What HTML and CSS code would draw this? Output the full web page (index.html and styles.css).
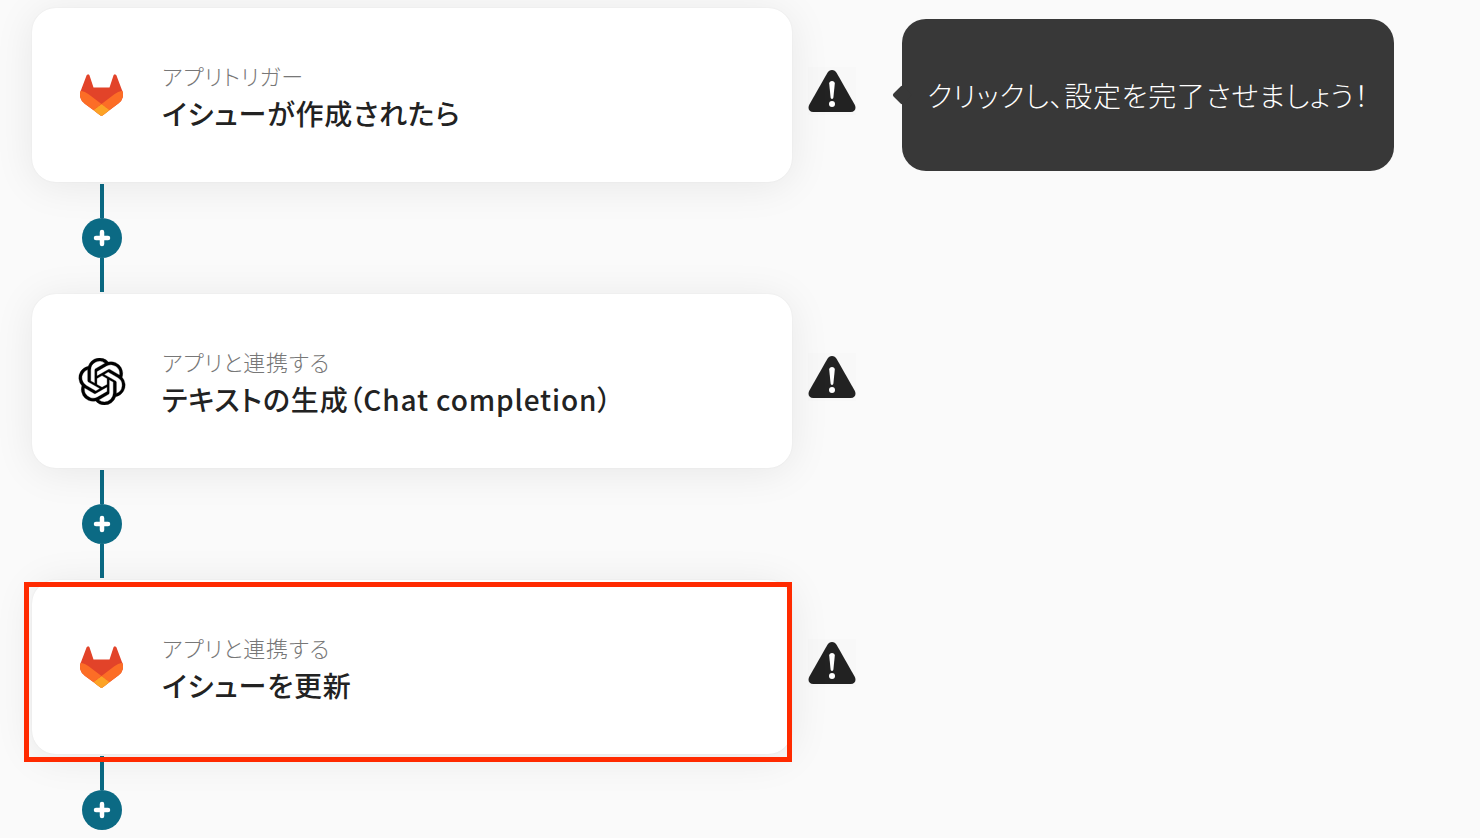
FILE: index.html
```html
<!DOCTYPE html>
<html>
<head>
  <meta charset="utf-8">
  <title>フローボット</title>
  <link rel="stylesheet" href="styles.css">
</head>
<body>
  <svg class="defs" width="0" height="0">
    <defs>
      <symbol id="gitlab" viewBox="94 97 192 185">
        <path fill="#e24329" d="m282.83 170.73-.27-.69-26.14-68.22a6.81 6.81 0 0 0-2.69-3.24 7 7 0 0 0-8 .43 7 7 0 0 0-2.32 3.52l-17.65 54h-71.47l-17.65-54a6.86 6.86 0 0 0-2.32-3.53 7 7 0 0 0-8-.43 6.87 6.87 0 0 0-2.69 3.24L97.44 170l-.26.69a48.54 48.54 0 0 0 16.1 56.1l.09.07.24.17 39.82 29.82 19.7 14.91 12 9.06a8.07 8.07 0 0 0 9.76 0l12-9.06 19.7-14.91 40.06-30 .1-.08a48.56 48.56 0 0 0 16.08-56.04Z"/>
        <path fill="#fc6d26" d="m282.83 170.73-.27-.69a88.3 88.3 0 0 0-35.15 15.8L190 229.25c19.55 14.79 36.57 27.64 36.57 27.64l40.06-30 .1-.08a48.56 48.56 0 0 0 16.1-56.08Z"/>
        <path fill="#fca326" d="m153.43 256.89 19.7 14.91 12 9.06a8.07 8.07 0 0 0 9.76 0l12-9.06 19.7-14.91S209.55 244 190 229.25c-19.55 14.75-36.57 27.64-36.57 27.64Z"/>
        <path fill="#fc6d26" d="M132.58 185.84A88.19 88.19 0 0 0 97.44 170l-.26.69a48.54 48.54 0 0 0 16.1 56.1l.09.07.24.17 39.82 29.82s17-12.85 36.57-27.64Z"/>
      </symbol>
      <symbol id="openai" viewBox="0 0 24 24">
        <path fill="#000" stroke="#000" stroke-width="0.15" d="M22.2819 9.8211a5.9847 5.9847 0 0 0-.5157-4.9108 6.0462 6.0462 0 0 0-6.5098-2.9A6.0651 6.0651 0 0 0 4.9807 4.1818a5.9847 5.9847 0 0 0-3.9977 2.9 6.0462 6.0462 0 0 0 .7427 7.0966 5.98 5.98 0 0 0 .511 4.9107 6.051 6.051 0 0 0 6.5146 2.9001A5.9847 5.9847 0 0 0 13.2599 24a6.0557 6.0557 0 0 0 5.7718-4.2058 5.9894 5.9894 0 0 0 3.9977-2.9001 6.0557 6.0557 0 0 0-.7475-7.0729zm-9.022 12.6081a4.4755 4.4755 0 0 1-2.8764-1.0408l.1419-.0804 4.7783-2.7582a.7948.7948 0 0 0 .3927-.6813v-6.7369l2.02 1.1686a.071.071 0 0 1 .038.052v5.5826a4.504 4.504 0 0 1-4.4945 4.4944zm-9.6607-4.1254a4.4708 4.4708 0 0 1-.5346-3.0137l.142.0852 4.783 2.7582a.7712.7712 0 0 0 .7806 0l5.8428-3.3685v2.3324a.0804.0804 0 0 1-.0332.0615L9.74 19.9502a4.4992 4.4992 0 0 1-6.1408-1.6464zM2.3408 7.8956a4.485 4.485 0 0 1 2.3655-1.9728V11.6a.7664.7664 0 0 0 .3879.6765l5.8144 3.3543-2.0201 1.1685a.0757.0757 0 0 1-.071 0l-4.8303-2.7865A4.504 4.504 0 0 1 2.3408 7.872zm16.5963 3.8558L13.1038 8.364 15.1192 7.2a.0757.0757 0 0 1 .071 0l4.8303 2.7913a4.4944 4.4944 0 0 1-.6765 8.1042v-5.6772a.79.79 0 0 0-.407-.667zm2.0107-3.0231l-.142-.0852-4.7735-2.7818a.7759.7759 0 0 0-.7854 0L9.409 9.2297V6.8974a.0662.0662 0 0 1 .0284-.0615l4.8303-2.7866a4.4992 4.4992 0 0 1 6.6802 4.66zM8.3065 12.863l-2.02-1.1638a.0804.0804 0 0 1-.038-.0567V6.0742a4.4992 4.4992 0 0 1 7.3757-3.4537l-.142.0805L8.704 5.459a.7948.7948 0 0 0-.3927.6813zm1.0976-2.3654l2.602-1.4998 2.6069 1.4998v2.9994l-2.5974 1.4997-2.6067-1.4997Z"/>
      </symbol>
      <symbol id="warn" viewBox="0 0 48 48">
        <path fill="#222" d="M24 3c-2 0-3.6 1-4.7 2.9L1.4 37.6C-.7 41.4 1.2 45 5.2 45h37.6c4 0 5.900-3.600 3.800-7.400L28.700 5.900C27.600 4 26 3 24 3Z"/>
        <path fill="#fff" d="M21.200 16.500c0-1.500 1.200-2.500 2.800-2.500s2.800 1 2.800 2.500l-1.400 14c-.1.900-.6 1.400-1.400 1.400s-1.300-.5-1.400-1.400Z"/>
        <circle fill="#fff" cx="24" cy="37" r="3"/>
      </symbol>
      <symbol id="plus" viewBox="0 0 40 40">
        <path stroke="#fff" stroke-width="4.500" stroke-linecap="round" fill="none" d="M20 14v12M14 20h12"/>
      </symbol>
    </defs>
  </svg>

  <main class="flow">

    <div class="step">
      <div class="card">
        <svg class="app-icon"><use href="#gitlab" x="2" y="3" width="43" height="42"/></svg>
        <div class="card-text">
          <div class="card-label">アプリトリガー</div>
          <div class="card-title">イシューが作成されたら</div>
        </div>
      </div>
      <svg class="warn"><use href="#warn"/></svg>
      <div class="tip">クリックし、設定を完了させましょう！</div>
    </div>

    <div class="link">
      <span class="link-line"></span>
      <svg class="link-add"><use href="#plus"/></svg>
      <span class="link-line"></span>
    </div>

    <div class="step">
      <div class="card">
        <svg class="app-icon"><use href="#openai" y="1" width="48" height="47"/></svg>
        <div class="card-text">
          <div class="card-label">アプリと連携する</div>
          <div class="card-title">テキストの生成（Chat completion）</div>
        </div>
      </div>
      <svg class="warn"><use href="#warn"/></svg>
    </div>

    <div class="link">
      <span class="link-line"></span>
      <svg class="link-add"><use href="#plus"/></svg>
      <span class="link-line"></span>
    </div>

    <div class="step">
      <div class="card">
        <svg class="app-icon"><use href="#gitlab" x="2" y="3" width="43" height="42"/></svg>
        <div class="card-text">
          <div class="card-label">アプリと連携する</div>
          <div class="card-title">イシューを更新</div>
        </div>
        <div class="highlight"></div>
      </div>
      <svg class="warn"><use href="#warn"/></svg>
    </div>

    <div class="link">
      <span class="link-line"></span>
      <svg class="link-add"><use href="#plus"/></svg>
    </div>

  </main>
</body>
</html>
```

FILE: styles.css
```css
html, body {
  margin: 0;
  height: 838px;
  overflow: hidden;
}

body {
  background-color: #fafafa;
  font-family: "Noto Sans CJK JP", "Noto Sans", sans-serif;
  font-feature-settings: "palt";
  color: #222;
}

.defs {
  display: block;
  height: 0;
}

.flow {
  padding: 8px 0 0 32px;
}

.step {
  display: flex;
  align-items: center;
}

.card {
  position: relative;
  flex: none;
  box-sizing: border-box;
  width: 760px;
  height: 174px;
  padding-left: 46px;
  display: flex;
  align-items: center;
  gap: 36px;
  background-color: #fff;
  border-radius: 24px;
  box-shadow: 0 0 2px rgba(0, 0, 0, 0.06), 0 4px 40px rgba(0, 0, 0, 0.08);
}

.app-icon {
  flex: none;
  width: 48px;
  height: 48px;
}

.card-text {
  padding-top: 4px;
}

.card-label {
  font-size: 22px;
  line-height: 28px;
  letter-spacing: 0.8px;
  font-weight: 300;
  color: #777;
}

.card-title {
  margin-top: 4px;
  font-size: 28px;
  line-height: 40px;
  letter-spacing: 0.85px;
  font-weight: 500;
}

.highlight {
  position: absolute;
  box-sizing: border-box;
  left: -8px;
  right: 0;
  top: 2px;
  height: 180px;
  border: 5px solid #ff2a00;
}

.warn {
  flex: none;
  width: 48px;
  height: 48px;
  margin: 0 0 8px 16px;
  background-color: #f8f8f8;
}

.tip {
  position: relative;
  flex: none;
  box-sizing: border-box;
  width: 492px;
  height: 152px;
  margin-left: 46px;
  display: flex;
  align-items: center;
  justify-content: center;
  background-color: #383838;
  border-radius: 24px;
  color: #fff;
  font-size: 28px;
  font-weight: 300;
  letter-spacing: 0.72px;
}

.tip::before {
  content: "";
  position: absolute;
  left: -7px;
  top: 50%;
  width: 14px;
  height: 14px;
  margin-top: -7px;
  background-color: #383838;
  border-radius: 2px;
  transform: rotate(45deg);
}

.link {
  width: 40px;
  margin: 2px 0 2px 50px;
  display: flex;
  flex-direction: column;
  align-items: center;
}

.link-line {
  width: 4px;
  height: 34px;
  background-color: #0b6a84;
}

.link-add {
  flex: none;
  width: 40px;
  height: 40px;
  background-color: #0b6a84;
  border-radius: 50%;
}
```
